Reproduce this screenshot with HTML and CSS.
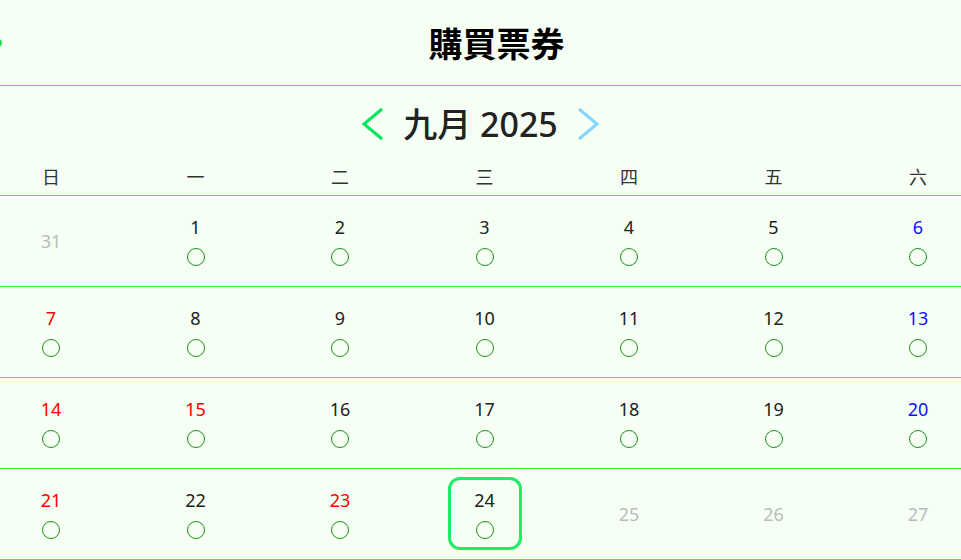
FILE: index.html
```html
<!DOCTYPE html>
<html lang="zh-Hant">
<head>
<meta charset="utf-8">
<title>購買票券</title>
<link rel="stylesheet" href="styles.css">
</head>
<body>
<div class="page">
  <header class="header">
    <span class="back-dot"></span>
    <h1 class="title">購買票券</h1>
  </header>
  <div class="month-nav">
    <svg class="chev" width="24" height="34" viewBox="0 0 24 34"><polyline points="21,2 3,17 21,32" fill="none" stroke="#00e65c" stroke-width="3"/></svg>
    <span class="month">九月 2025</span>
    <svg class="chev" width="24" height="34" viewBox="0 0 24 34"><polyline points="3,2 21,17 3,32" fill="none" stroke="#80d8ff" stroke-width="3"/></svg>
  </div>
  <div class="grid weekdays">
    <div class="wd">日</div><div class="wd">一</div><div class="wd">二</div><div class="wd">三</div><div class="wd">四</div><div class="wd">五</div><div class="wd">六</div>
  </div>
  <div class="week">
    <div class="grid">
      <div class="cell"><span class="num muted">31</span></div>
      <div class="cell"><span class="num">1</span><span class="dot"></span></div>
      <div class="cell"><span class="num">2</span><span class="dot"></span></div>
      <div class="cell"><span class="num">3</span><span class="dot"></span></div>
      <div class="cell"><span class="num">4</span><span class="dot"></span></div>
      <div class="cell"><span class="num">5</span><span class="dot"></span></div>
      <div class="cell"><span class="num blue">6</span><span class="dot"></span></div>
    </div>
  </div>
  <div class="week">
    <div class="grid">
      <div class="cell"><span class="num red">7</span><span class="dot"></span></div>
      <div class="cell"><span class="num">8</span><span class="dot"></span></div>
      <div class="cell"><span class="num">9</span><span class="dot"></span></div>
      <div class="cell"><span class="num">10</span><span class="dot"></span></div>
      <div class="cell"><span class="num">11</span><span class="dot"></span></div>
      <div class="cell"><span class="num">12</span><span class="dot"></span></div>
      <div class="cell"><span class="num blue">13</span><span class="dot"></span></div>
    </div>
  </div>
  <div class="week">
    <div class="grid">
      <div class="cell"><span class="num red">14</span><span class="dot"></span></div>
      <div class="cell"><span class="num red">15</span><span class="dot"></span></div>
      <div class="cell"><span class="num">16</span><span class="dot"></span></div>
      <div class="cell"><span class="num">17</span><span class="dot"></span></div>
      <div class="cell"><span class="num">18</span><span class="dot"></span></div>
      <div class="cell"><span class="num">19</span><span class="dot"></span></div>
      <div class="cell"><span class="num blue">20</span><span class="dot"></span></div>
    </div>
  </div>
  <div class="week">
    <div class="grid">
      <div class="cell"><span class="num red">21</span><span class="dot"></span></div>
      <div class="cell"><span class="num">22</span><span class="dot"></span></div>
      <div class="cell"><span class="num red">23</span><span class="dot"></span></div>
      <div class="cell"><div class="selected"><span class="num">24</span><span class="dot"></span></div></div>
      <div class="cell"><span class="num muted">25</span></div>
      <div class="cell"><span class="num muted">26</span></div>
      <div class="cell"><span class="num muted">27</span></div>
    </div>
  </div>
</div>
</body>
</html>
```

FILE: styles.css
```css
html, body {
  margin: 0;
  padding: 0;
  background: #f5fff4;
  overflow: hidden;
}
body {
  font-family: "Noto Sans", "Noto Sans CJK TC", sans-serif;
  color: #222;
}
.page {
  width: 961px;
  height: 560px;
  overflow: hidden;
}
.header {
  position: relative;
  height: 85px;
  border-bottom: 1px solid #44ea44;
  display: flex;
  align-items: center;
  justify-content: center;
}
.back-dot {
  position: absolute;
  left: -6px;
  top: 39px;
  width: 8px;
  height: 8px;
  border-radius: 50%;
  background: #22dd55;
}
.title {
  margin: 0 0 0 32px;
  font-family: "Noto Sans CJK TC", sans-serif;
  font-size: 34px;
  font-weight: 700;
  color: #000;
  line-height: 40px;
}
.month-nav {
  height: 72px;
  display: flex;
  align-items: center;
  justify-content: center;
  gap: 18px;
  box-sizing: border-box;
  padding-top: 4px;
}
.month {
  font-family: "Noto Sans", "Noto Sans CJK TC", sans-serif;
  font-size: 34px;
  font-weight: 500;
  line-height: 40px;
  color: #222;
}
.grid {
  display: grid;
  grid-template-columns: repeat(7, 144.5px);
  margin-left: -21.25px;
  width: 1011.5px;
}
.weekdays {
  height: 37px;
  border-bottom: 1px solid #44ea44;
  align-items: center;
}
.wd {
  text-align: center;
  font-family: "Noto Sans CJK TC", sans-serif;
  font-size: 18px;
  line-height: 24px;
  color: #333;
  padding-bottom: 2px;
}
.week {
  border-bottom: 1px solid #44ea44;
}
.week .grid {
  height: 90px;
}
.cell {
  display: flex;
  flex-direction: column;
  align-items: center;
  justify-content: center;
  gap: 9px;
  padding-bottom: 1px;
}
.num {
  font-size: 18px;
  line-height: 24px;
  color: #222;
}
.num.muted { color: #bbbbbb; }
.num.red { color: #ff0000; }
.num.blue { color: #1010ff; }
.dot {
  width: 18px;
  height: 18px;
  box-sizing: border-box;
  border: 1px solid #1e8f1e;
  border-radius: 50%;
}
.selected {
  width: 74px;
  height: 73px;
  box-sizing: border-box;
  border: 3px solid #1eee66;
  border-radius: 12px;
  display: flex;
  flex-direction: column;
  align-items: center;
  justify-content: center;
  gap: 9px;
}
```
